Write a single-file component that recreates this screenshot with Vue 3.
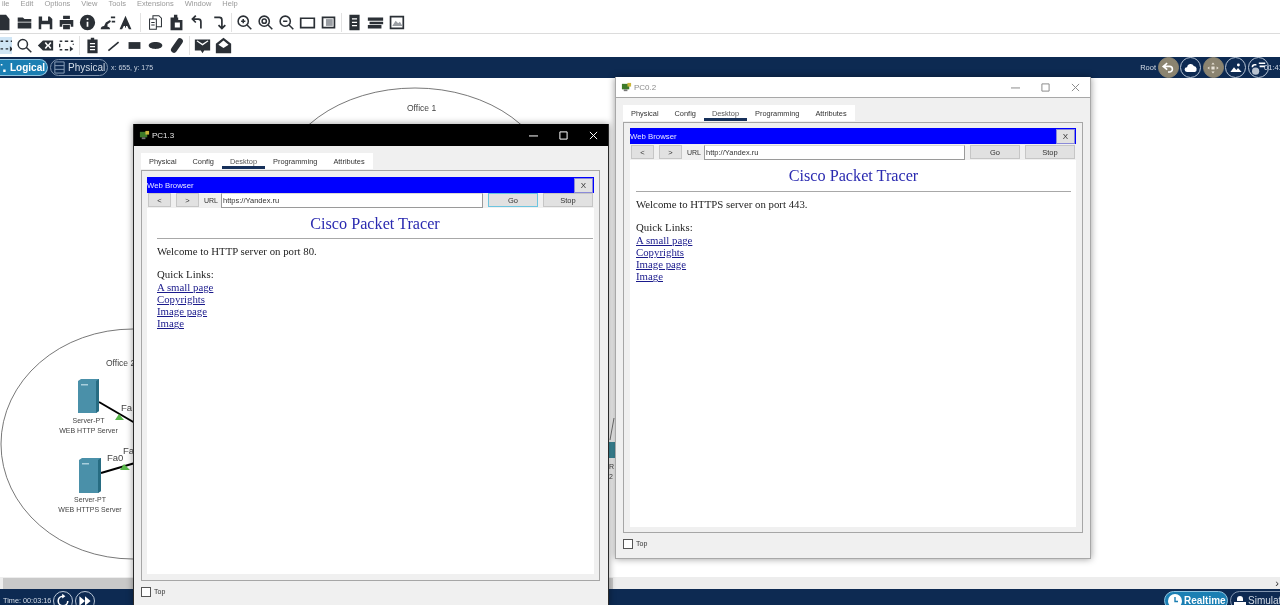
<script setup>
const menus = ['ile', 'Edit', 'Options', 'View', 'Tools', 'Extensions', 'Window', 'Help']

const toolbar1 = [
  { f: 'M4 1h9l4 5v13H4z' },
  { f: 'M2 4h6l2 2h8v3H2z M2 10h16v7H2z' },
  { f: 'M2 3h13l3 3v12H2z M6 3v5h7V3z M5 12v6h10v-6z' },
  { f: 'M6 2h8v4H6z M2 7h16v8h-3v-3H5v3H2z M6 13h8v5H6z' },
  { f: 'M10 1a9 9 0 1 0 0 18a9 9 0 1 0 0-18z M9 5h2v2H9z M9 9h2v6H9z' },
  { f: 'M2 18c0-3 2-4 4-4l2-4 5-3 1 2-4 3v3c2 0 3 1 3 3z M14 3h5v2h-5z M15 8h4v2h-4z', t: 'tight1' },
  { f: 'M10 2 3 18h3l2-4h4l2 4h3z', s: 'M10 6v10', sep: 'wide', t: 'tight3' },
  { s: 'M3 6h8v12H3z M7 6V2h7l3 3v10h-6 M5 10h4M5 13h4' },
  { f: 'M3 4h9v3h5v12H3z M7 1h4v3H7z M8 10v6h6v-6z' },
  { s: 'M8 2 4 6l4 4 M4 6h7a3 3 0 0 1 3 3v8', w: 2 },
  { s: 'M5 4h6a3 3 0 0 1 3 3v10 M10 13l4 4 4-4', w: 2, sep: 'narrow' },
  { s: 'M8.5 2.5a6 6 0 1 0 0 12a6 6 0 1 0 0-12z M13 13l5 5 M6 8.5h5M8.5 6v5', w: 1.8 },
  { s: 'M8.5 2.5a6 6 0 1 0 0 12a6 6 0 1 0 0-12z M13 13l5 5 M8.5 6a2.5 2.5 0 1 0 0 5a2.5 2.5 0 1 0 0-5z', w: 1.8 },
  { s: 'M8.5 2.5a6 6 0 1 0 0 12a6 6 0 1 0 0-12z M13 13l5 5 M6 8.5h5', w: 1.8 },
  { s: 'M2 5h16v11H2z', w: 2 },
  { f: 'M2 3h16v14H2z M4 5v10h12V5z', g: 'M7 6h8v8H7z', sep: 'narrow' },
  { f: 'M4 1h12v18H4z M7 5h6v1.5H7z M7 9h6v1.5H7z M7 13h6v1.5H7z' },
  { f: 'M1 4h18v4H1z M3 9h16v3H3z M1 13h16v4H1z' },
  { f: 'M2 2h17v16H2z M4 4v12h13V4z', g: 'M5 14l4-6 3 3 2-2 3 5z' }
]

const toolbar2 = [
  { s: 'M3 5h3M9 5h3M15 5h2M3 14h3M9 14h3', w: 1.6, f: 'M14 11l4 3-4 3z', on: true },
  { s: 'M8 3a5.5 5.5 0 1 0 0 11a5.5 5.5 0 1 0 0-11z M12 12l6 6', w: 1.8 },
  { f: 'M7 4h12v12H7L1 10z M9 7l2.5 3L9 13l1.500 1 2.500-3 2.500 3 1.500-1-2.500-3L17 7l-1.500-1-2.500 3-2.500-3z' },
  { s: 'M2 5h3M8 5h4M15 5h3M2 15h3M8 15h4M2 8v4M18 8v1', w: 1.6, f: 'M14 11l4 3-4 3z', sep: 'narrow' },
  { f: 'M4 3h4V1h4v2h4v16H4z M7 7v1.500h6V7z M7 10.500V12h6v-1.500z M7 14v1.500h6V14z' },
  { s: 'M4 16 16 6', w: 2 },
  { f: 'M3 6h14v8H3z' },
  { f: 'M10 6c4.500 0 8 1.800 8 4s-3.500 4-8 4-8-1.800-8-4 3.500-4 8-4z' },
  { s: 'M7 15 14 5', w: 7, cap: true, sep: 'narrow' },
  { f: 'M1 3h18v13h-7l-2 3-2-3H1z M3 5l7 5 7-5-1-1-6 4-6-4z' },
  { f: 'M10 1l9 7v11H1V8z M4 9l6 4 6-4-6-5z' }
]

const links = ['A small page', 'Copyrights', 'Image page', 'Image']
const tabs = ['Physical', 'Config', 'Desktop', 'Programming', 'Attributes']

const windows = [
  { id: 'win-a', title: 'PC1.3', url: 'https://Yandex.ru', port: 'HTTP server on port 80.', focus: true },
  { id: 'win-b', title: 'PC0.2', url: 'http://Yandex.ru', port: 'HTTPS server on port 443.', focus: false }
]
</script>

<template>
  <div class="app">
    <nav class="menu">
      <span v-for="m in menus" :key="m">{{ m }}</span>
    </nav>

    <div class="toolbar first">
      <template v-for="(ic, n) in toolbar1" :key="n">
        <svg class="icon" :class="ic.t" viewBox="0 0 20 20">
          <path v-if="ic.f" :d="ic.f" fill-rule="evenodd" class="fill" />
          <path v-if="ic.g" :d="ic.g" class="grey" />
          <path v-if="ic.s" :d="ic.s" class="line" :stroke-width="ic.w || 1.200" />
        </svg>
        <i v-if="ic.sep" class="sep" :class="ic.sep"></i>
      </template>
    </div>

    <div class="toolbar second">
      <template v-for="(ic, n) in toolbar2" :key="n">
        <span class="slot" :class="{ on: ic.on }">
          <svg class="icon" viewBox="0 0 20 20">
            <path v-if="ic.f" :d="ic.f" fill-rule="evenodd" class="fill" />
            <path v-if="ic.s" :d="ic.s" class="line" :class="{ round: ic.cap }" :stroke-width="ic.w || 1.200" />
          </svg>
        </span>
        <i v-if="ic.sep" class="sep" :class="ic.sep"></i>
      </template>
    </div>

    <div class="navbar">
      <span class="pill active logical">
        <svg class="pill-icon" viewBox="0 0 10 12"><path d="M1 1h2v2H1z M4 8h3v3H4z" fill="#fff" /></svg>
        Logical
      </span>
      <span class="pill physical">
        <svg class="doc" viewBox="0 0 14 14"><path d="M2 1h10v12H2z M2 5h10 M2 9h10" fill="none" stroke="#8fa3bd" /></svg>
        Physical
      </span>
      <span class="coords">x: 655, y: 175</span>
      <span class="root">Root</span>
      <span class="round tan">
        <svg viewBox="0 0 20 20"><path d="M9 4 4 8l5 4 M4 8h8a3.500 3.500 0 0 1 0 7h-2" fill="none" stroke="#fff" stroke-width="2" /></svg>
      </span>
      <span class="round">
        <svg viewBox="0 0 20 20"><path d="M5 15a3 3 0 0 1 0-6 4.500 4.500 0 0 1 8.500-1.500A4 4 0 0 1 15 15z" fill="#fff" /></svg>
      </span>
      <span class="round tan">
        <svg viewBox="0 0 20 20"><path d="M10 3l2 2.500H8z M10 17l2-2.500H8z M3 10l2.500-2v4z M17 10l-2.500-2v4z M8 8h4v4H8z" fill="#e8e2d6" /></svg>
      </span>
      <span class="round">
        <svg viewBox="0 0 20 20"><path d="M3 15l4.500-6 3 3.500 2-2.500 4.500 5z M13 4.500a1.800 1.800 0 1 0 0 3.600a1.800 1.800 0 1 0 0-3.600z" fill="#fff" /></svg>
      </span>
      <span class="round last">
        <svg viewBox="0 0 20 20"><path d="M2 9a4 4 0 0 1 4-4h2v2H6a2 2 0 0 0-2 2z M11 3h8v2h-8z M12 7h7v2h-7z" fill="#fff" /><circle cx="7" cy="14" r="4.500" fill="#b9c3d0" /></svg>
      </span>
      <span class="clock">01:41</span>
    </div>

    <main class="canvas">
      <svg class="scene" viewBox="0 78 1280 499">
        <ellipse cx="415" cy="188" rx="137" ry="100" class="cluster" />
        <ellipse cx="133" cy="444" rx="132" ry="115" class="cluster" />
        <text x="407" y="111" class="office">Office 1</text>
        <text x="106" y="366" class="office">Office 2</text>

        <line x1="99" y1="402" x2="135" y2="423" class="link" />
        <line x1="101" y1="473" x2="135" y2="463" class="link" />
        <path d="M115 420l4-6 5 6z M120 470l4-6 6 6z" fill="#59b84a" />
        <text x="121" y="411" class="port">Fa</text>
        <text x="107" y="461" class="port">Fa0</text>
        <text x="123" y="454" class="port">Fa</text>

        <path d="M78 381l3-2h18v32l-3 2H78z" fill="#4a90a9" />
        <path d="M96 381l3-2v32l-3 2z" fill="#276c82" />
        <path d="M81 384h7v1.500h-7z" fill="#a9cfdc" />
        <path d="M79 460l3-2h19v33l-3 2H79z" fill="#4a90a9" />
        <path d="M98 460l3-2v33l-3 2z" fill="#276c82" />
        <path d="M82 463h7v1.500h-7z" fill="#a9cfdc" />

        <text x="88.500" y="423" class="label">Server-PT</text>
        <text x="88.500" y="433" class="label">WEB HTTP Server</text>
        <text x="90" y="502" class="label">Server-PT</text>
        <text x="90" y="512" class="label">WEB HTTPS Server</text>

        <path d="M614 418 610 440" fill="none" stroke="#555" stroke-width="0.800" />
        <rect x="608" y="442" width="7" height="16" fill="#3f8fa0" />
        <text x="609" y="469" class="tiny">R</text>
        <text x="609" y="479" class="tiny">2</text>
      </svg>
    </main>

    <div class="scrollbar">
      <span class="thumb"></span>
      <span class="arrow">›</span>
    </div>

    <footer class="statusbar">
      <span class="time">Time: 00:03:16</span>
      <span class="round big">
        <svg viewBox="0 0 20 20"><path d="M10 4a6 6 0 1 0 6 6" fill="none" stroke="#fff" stroke-width="2" /><path d="M9 1l4 3-4 3z" fill="#fff" /></svg>
      </span>
      <span class="round big">
        <svg viewBox="0 0 20 20"><path d="M3 4l7 6-7 6z M10 4l7 6-7 6z" fill="#fff" /></svg>
      </span>
      <span class="pill active realtime">
        <svg class="mode" viewBox="0 0 14 14"><circle cx="7" cy="7" r="7" fill="#fff" /><path d="M7 3v4.500h3" fill="none" stroke="#1b7fb3" stroke-width="1.400" /></svg>
        Realtime
      </span>
      <span class="pill simulation">
        <svg class="mode" viewBox="0 0 14 14"><path d="M4 5a3 3 0 0 1 6 0v2H4z M1 8h12v6H1z" fill="#fff" /></svg>
        Simulation
      </span>
    </footer>

    <section v-for="w in windows" :key="w.id" class="window" :class="w.id">
      <header class="titlebar">
        <svg class="pc" viewBox="0 0 12 12"><path d="M1 2h8v6H1z" fill="#3d7a2a" /><path d="M7 1h4v4H7z" fill="#c9b53a" /><path d="M3 8h4v2H3z" fill="#777" /></svg>
        <span class="win-name">{{ w.title }}</span>
        <span class="controls">
          <svg viewBox="0 0 10 10"><path d="M0 5.500h10" /></svg>
          <svg viewBox="0 0 10 10"><path d="M1 1h8v8H1z" /></svg>
          <svg viewBox="0 0 10 10"><path d="M1 1l8 8M9 1l-8 8" /></svg>
        </span>
      </header>

      <div class="win-body">
        <div class="tabs">
          <span v-for="t in tabs" :key="t" class="tab" :class="{ current: t === 'Desktop' }">{{ t }}</span>
        </div>

        <div class="panel">
          <div class="browser-title">
            <span>Web Browser</span>
            <button class="close">X</button>
          </div>
          <div class="addr">
            <button class="btn small">&lt;</button>
            <button class="btn small">&gt;</button>
            <div class="url-wrap">
              <label class="url-label">URL</label>
              <div class="url">{{ w.url }}</div>
            </div>
            <button class="btn wide" :class="{ focus: w.focus }">Go</button>
            <button class="btn wide">Stop</button>
          </div>
          <article class="content">
            <h1>Cisco Packet Tracer</h1>
            <hr />
            <p class="welcome">Welcome to {{ w.port }}</p>
            <p class="quick">Quick Links:</p>
            <a v-for="l in links" :key="l" href="#" class="web-link">{{ l }}</a>
          </article>
        </div>

        <div class="foot">
          <span class="check"></span>
          <span>Top</span>
        </div>
      </div>
    </section>
  </div>
</template>

<style>
html, body { margin: 0; overflow: hidden; background: #fff; }
</style>

<style scoped>
.app {
  position: relative;
  width: 1280px;
  height: 605px;
  overflow: hidden;
  display: flex;
  flex-direction: column;
  background: #fff;
  font-family: "Liberation Sans", Arial, sans-serif;
  filter: blur(0.4px);
}

.menu {
  height: 11px;
  display: flex;
  gap: 11px;
  padding-left: 2px;
  font-size: 7.5px;
  line-height: 7px;
  color: #9a9a9a;
  flex: none;
}

.toolbar {
  height: 22px;
  flex: none;
  display: flex;
  align-items: center;
  background: #fff;
}
.toolbar.first {
  border-bottom: 1px solid #dcdcdc;
  margin-left: -7px;
}
.toolbar.second {
  height: 23px;
}
.icon {
  width: 17px;
  height: 17px;
  margin: 0 2px;
  flex: none;
}
.icon.tight1 { margin-left: 1px; }
.icon.tight3 { margin-left: -1px; }
.fill { fill: #2b3036; }
.grey { fill: #9a9ea3; }
.line {
  fill: none;
  stroke: #2b3036;
}
.line.round { stroke-linecap: round; }
.sep {
  width: 1px;
  height: 19px;
  background: #e2e2e2;
  flex: none;
}
.sep.wide { margin: 0 4px; }
.sep.narrow { margin: 0 2px; }
.slot {
  display: flex;
  align-items: center;
  justify-content: center;
  width: 21px;
  height: 17px;
  flex: none;
}
.slot.on {
  background: #cfe5f5;
  width: 12px;
  margin-right: 2px;
  overflow: hidden;
}

.navbar, .statusbar {
  background: #0d2a52;
  display: flex;
  align-items: center;
  color: #d5dde8;
  flex: none;
}
.navbar {
  height: 21px;
  overflow: hidden;
}
.pill {
  display: inline-flex;
  align-items: center;
  border: 1px solid #7f93ad;
  border-radius: 10px;
  font-size: 10px;
  box-sizing: border-box;
  flex: none;
}
.pill.active {
  background: #1b7fb3;
  border-color: #8fc4e0;
  color: #fff;
  font-weight: bold;
}
.logical {
  width: 48px;
  height: 17px;
  border-left: 0;
  border-radius: 0 9px 9px 0;
  gap: 2px;
}
.pill-icon {
  width: 8px;
  height: 12px;
}
.physical {
  width: 58px;
  height: 17px;
  margin-left: 2px;
  padding-left: 2px;
  gap: 2px;
}
.doc {
  width: 13px;
  height: 13px;
}
.coords {
  font-size: 7px;
  margin-left: 3px;
  color: #c9d2df;
}
.root {
  margin-left: auto;
  font-size: 7.5px;
  margin-right: 0;
}
.round {
  width: 21px;
  height: 21px;
  margin-left: 1.500px;
  border: 1px solid #b9c6d6;
  border-radius: 50%;
  box-sizing: border-box;
  display: flex;
  align-items: center;
  justify-content: center;
  flex: none;
}
.round svg {
  width: 16px;
  height: 16px;
}
.round.tan {
  background: #8b8470;
  border-color: #8b8470;
}
.clock {
  font-size: 7.5px;
  white-space: nowrap;
  margin-left: -4.500px;
  width: 16px;
  overflow: hidden;
  position: relative;
}

.canvas {
  flex: 1;
  min-height: 0;
  position: relative;
  background: #fff;
}
.scene {
  position: absolute;
  inset: 0;
  width: 100%;
  height: 100%;
}
.cluster {
  fill: none;
  stroke: #555;
  stroke-width: 0.8;
}
.office {
  font-size: 8.5px;
  fill: #444;
  font-family: "Liberation Sans", Arial, sans-serif;
}
.link {
  stroke: #000;
  stroke-width: 2;
}
.port {
  font-size: 9.500px;
  fill: #444;
  font-family: "Liberation Sans", Arial, sans-serif;
}
.label {
  font-size: 7px;
  fill: #444;
  text-anchor: middle;
  font-family: "Liberation Sans", Arial, sans-serif;
}
.tiny {
  font-size: 7px;
  fill: #444;
  font-family: "Liberation Sans", Arial, sans-serif;
}

.scrollbar {
  height: 12px;
  flex: none;
  background: #ededed;
  position: relative;
  display: flex;
  justify-content: flex-end;
  align-items: center;
}
.thumb {
  position: absolute;
  left: 3px;
  top: 1px;
  bottom: 0;
  width: 610px;
  background: #c9c9c9;
}
.arrow {
  font-size: 11px;
  line-height: 10px;
  color: #333;
  padding-right: 1px;
}

.statusbar {
  height: 16px;
  overflow: visible;
  align-items: flex-start;
}
.time {
  font-size: 7.300px;
  margin: 7px 2px 0 3px;
  width: 48px;
  white-space: nowrap;
}
.round.big {
  width: 20px;
  height: 20px;
  margin-top: 2px;
  margin-left: 0;
}
.round.big + .round.big {
  margin-left: 2px;
}
.realtime {
  margin-left: auto;
  width: 64px;
  height: 19px;
  margin-top: 2px;
  padding-left: 3px;
  gap: 2px;
}
.simulation {
  width: 90px;
  height: 19px;
  margin: 2px -40px 0 2px;
  padding-left: 2px;
  gap: 1px;
}
.mode {
  width: 14px;
  height: 14px;
}

.window {
  position: absolute;
  display: flex;
  flex-direction: column;
  box-sizing: border-box;
  background: #f0f0f0;
  box-shadow: 0 0 7px rgba(0, 0, 0, 0.4);
  border-style: solid;
  border-width: 0 1px 1px;
}
.win-a {
  left: 133px;
  top: 124px;
  width: 476px;
  height: 482px;
  border-color: #2a2a2a;
}
.win-b {
  left: 615px;
  top: 77px;
  width: 476px;
  height: 482px;
  border-color: #a8a8a8;
}
.titlebar {
  display: flex;
  align-items: center;
  flex: none;
  font-size: 8px;
  padding-left: 5px;
}
.win-a .titlebar {
  height: 22px;
  background: #000;
  color: #e8e8e8;
}
.win-b .titlebar {
  height: 20px;
  background: #fff;
  color: #8c8c8c;
}
.pc {
  width: 11px;
  height: 11px;
  margin-right: 2px;
}
.controls {
  margin-left: auto;
  display: flex;
  align-items: center;
  gap: 21px;
  padding-right: 10px;
}
.controls svg {
  width: 9px;
  height: 9px;
  fill: none;
  stroke-width: 1.100;
}
.win-a .controls svg { stroke: #fff; }
.win-b .controls svg { stroke: #8c8c8c; }

.win-body {
  flex: 1;
  min-height: 0;
  display: flex;
  flex-direction: column;
  padding: 7px 7px 0;
}
.win-a .win-body { padding-right: 8px; }
.win-b .win-body { border-top: 1px solid #a8a8a8; }
.tabs {
  display: flex;
  align-self: flex-start;
  height: 16px;
  background: #fff;
  margin-bottom: 1px;
  font-size: 7.400px;
  flex: none;
}
.tab {
  padding: 0 8px;
  height: 16px;
  line-height: 17px;
  color: #333;
  box-sizing: border-box;
}
.tab.current {
  border-bottom: 3px solid #16305a;
  color: #555;
}
.panel {
  flex: 1;
  min-height: 0;
  border: 1px solid #a6a6a6;
  padding: 6px 5px;
  display: flex;
  flex-direction: column;
  background: #f0f0f0;
}
.win-b .panel { padding: 5px 6px; }
.browser-title {
  height: 16px;
  flex: none;
  background: #0000ff;
  color: #e8e8ff;
  font-size: 7.800px;
  display: flex;
  align-items: center;
  justify-content: space-between;
  box-sizing: border-box;
  padding-right: 1px;
}
button {
  font-family: inherit;
  padding: 0;
  color: #333;
}
.close {
  width: 19px;
  height: 15px;
  font-size: 8px;
  background: #e1e1e1;
  border: 1px solid #8a8ad8;
}
.addr {
  height: 15px;
  flex: none;
  display: flex;
  gap: 5px;
  padding: 0 1px;
  background: #f0f0f0;
}
.win-b .addr { margin-top: 1px; }
.btn {
  background: #e1e1e1;
  border: 1px solid #c6c6c6;
  font-size: 7.500px;
  height: 14px;
  flex: none;
}
.btn.small { width: 23px; }
.btn.wide { width: 50px; }
.btn.focus {
  border-color: #6cc4df;
}
.url-wrap {
  flex: 1;
  display: flex;
  align-items: center;
  min-width: 0;
}
.url-label {
  width: 17px;
  box-sizing: border-box;
  font-size: 7px;
  color: #333;
  flex: none;
}
.url {
  flex: 1;
  height: 15px;
  line-height: 14px;
  background: #fff;
  border: 1px solid #9a9a9a;
  border-top-color: #d8d8d8;
  box-sizing: border-box;
  padding-left: 1px;
  font-size: 7.500px;
  color: #333;
}
.content {
  flex: 1;
  min-height: 0;
  background: #fff;
  padding: 0 1px 0 10px;
  font-family: "Liberation Serif", "Times New Roman", serif;
  font-size: 10.800px;
  line-height: 12.300px;
  color: #1d1d1d;
  display: flex;
  flex-direction: column;
  align-items: flex-start;
}
.win-b .content { padding: 0 5px 0 6px; }
h1 {
  width: 100%;
  margin: 6px 0 0;
  text-align: center;
  font-size: 16.200px;
  line-height: 20px;
  font-weight: normal;
  color: #2a2ab0;
}
hr {
  width: 100%;
  box-sizing: border-box;
  margin: 4px 0 0;
  border: 0;
  border-top: 1px solid #a8a8a8;
  height: 0;
}
.win-b hr { margin-top: 5px; }
.welcome { margin: 6px 0 0; }
.quick { margin: 11px 0 0; }
.web-link {
  color: #1a1a8c;
  text-decoration: underline;
}
.foot {
  height: 24px;
  flex: none;
  display: flex;
  align-items: flex-start;
  gap: 3px;
  padding-top: 6px;
  box-sizing: border-box;
  font-size: 7px;
  line-height: 10px;
  color: #333;
}
.win-b .foot { height: 25px; }
.check {
  width: 10px;
  height: 10px;
  box-sizing: border-box;
  border: 1px solid #555;
  background: #fff;
}
</style>
